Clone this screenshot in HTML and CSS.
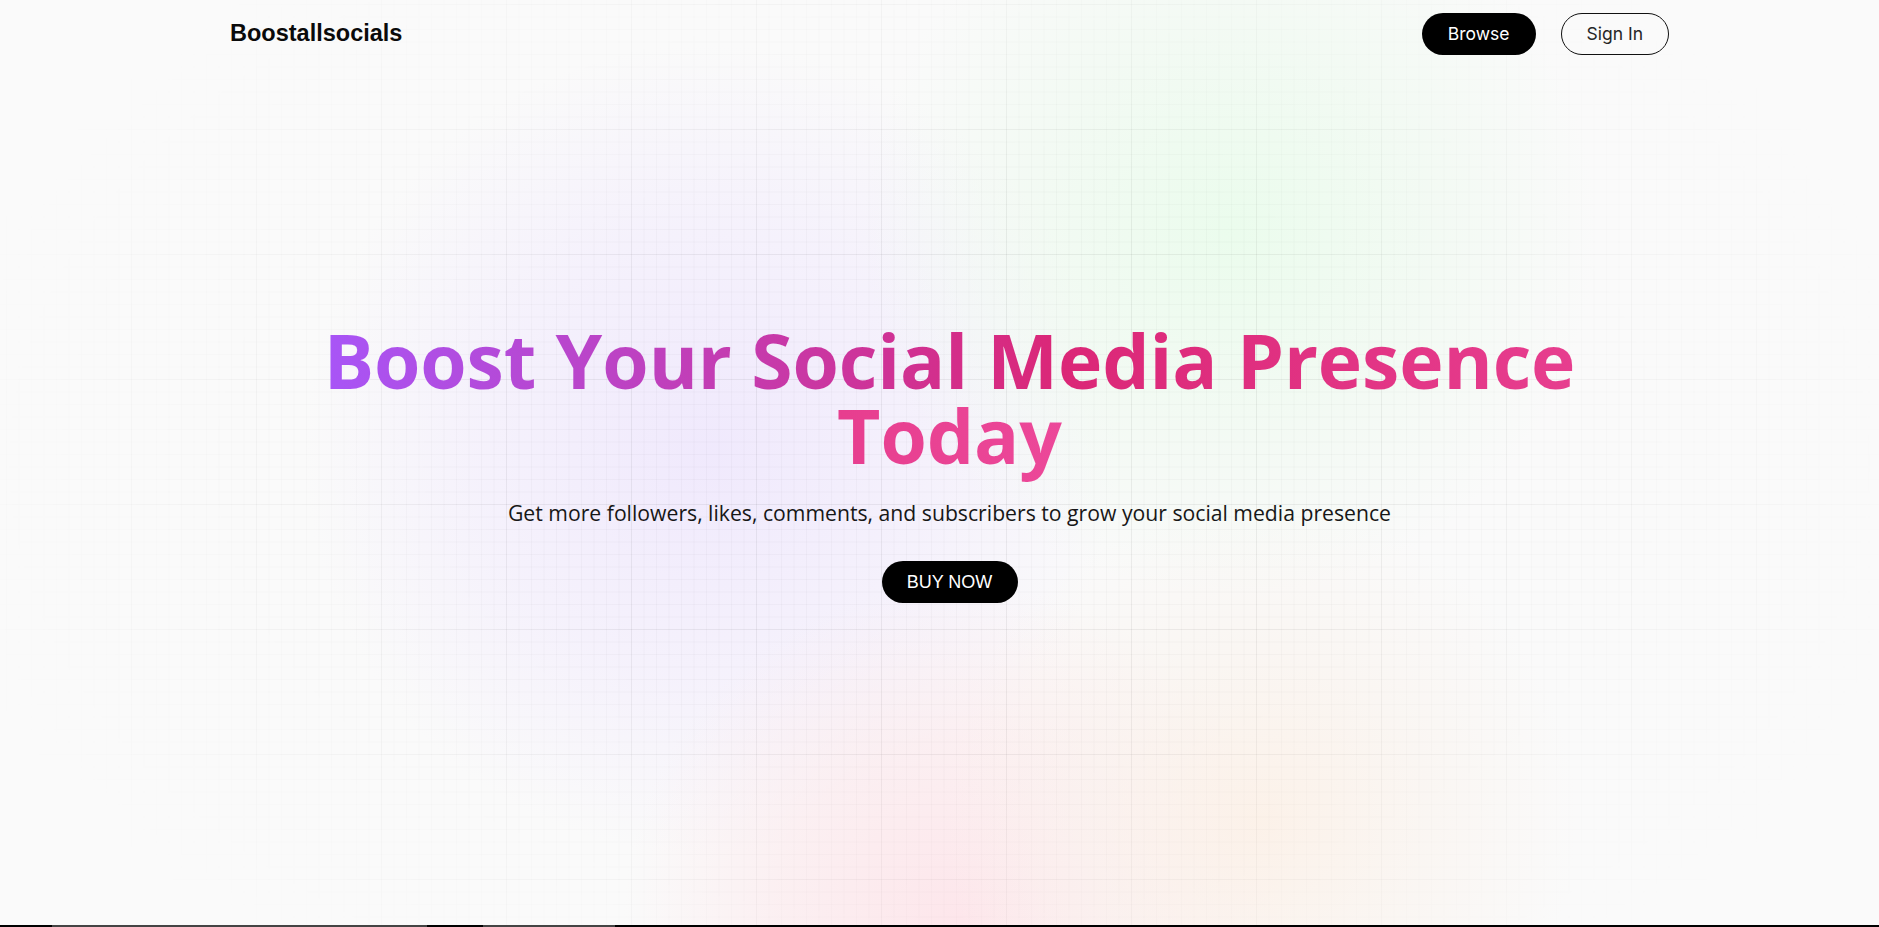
FILE: index.html
```html
<!DOCTYPE html>
<html lang="en">
<head>
<meta charset="utf-8">
<title>Boostallsocials</title>
<link rel="stylesheet" href="styles.css">
</head>
<body>
<div class="backdrop">
  <div class="blob blob-purple"></div>
  <div class="blob blob-green"></div>
  <div class="blob blob-pink"></div>
  <div class="blob blob-peach"></div>
  <div class="grid"></div>
</div>
<div class="page">
  <header class="nav">
    <a class="logo" href="#">Boostallsocials</a>
    <div class="nav-actions">
      <a class="btn btn-dark" href="#">Browse</a>
      <a class="btn btn-outline" href="#">Sign In</a>
    </div>
  </header>
  <main class="hero">
    <h1 class="hero-title"><span class="gradient-text">Boost Your Social Media Presence Today</span></h1>
    <p class="hero-sub">Get more followers, likes, comments, and subscribers to grow your social media presence</p>
    <a class="btn-buy" href="#">BUY NOW</a>
  </main>
</div>
<div class="scrollbar"></div>
</body>
</html>
```
FILE: styles.css
```css
* { box-sizing: border-box; }
html, body { margin: 0; padding: 0; }
body {
  background: #fafafa;
  font-family: "Open Sans", "Noto Sans", sans-serif;
  color: #111;
  min-height: 927px;
  overflow: hidden;
  position: relative;
}
a { text-decoration: none; }

.backdrop {
  position: absolute;
  inset: 0;
  overflow: hidden;
  z-index: 0;
}
.blob {
  position: absolute;
  border-radius: 50%;
}
.blob-purple {
  left: 300px; top: 40px; width: 820px; height: 820px;
  background: radial-gradient(circle, rgba(238,230,253,0.85) 0%, rgba(242,236,253,0.6) 40%, rgba(250,250,250,0) 70%);
}
.blob-green {
  left: 860px; top: -140px; width: 740px; height: 740px;
  background: radial-gradient(circle, rgba(234,252,236,0.95) 0%, rgba(238,250,239,0.6) 38%, rgba(250,250,250,0) 70%);
}
.blob-pink {
  left: 620px; top: 580px; width: 680px; height: 680px;
  background: radial-gradient(circle, rgba(253,230,235,1) 0%, rgba(252,235,238,0.7) 38%, rgba(250,250,250,0) 70%);
}
.blob-peach {
  left: 940px; top: 500px; width: 640px; height: 640px;
  background: radial-gradient(circle, rgba(252,240,230,0.85) 0%, rgba(250,243,237,0.55) 38%, rgba(250,250,250,0) 70%);
}
.grid {
  position: absolute;
  inset: 0;
  background-image:
    linear-gradient(to right, rgba(0,0,0,0.035) 1px, transparent 1px),
    linear-gradient(to bottom, rgba(0,0,0,0.035) 1px, transparent 1px),
    linear-gradient(to right, rgba(0,0,0,0.022) 1px, transparent 1px),
    linear-gradient(to bottom, rgba(0,0,0,0.022) 1px, transparent 1px);
  background-size: 125px 125px, 125px 125px, 12.5px 12.5px, 12.5px 12.5px;
  background-position: 6px 4px, 6px 4px, 6px 4px, 6px 4px;
  -webkit-mask-image: radial-gradient(ellipse 55% 70% at 50% 50%, #000 40%, transparent 100%);
  mask-image: radial-gradient(ellipse 55% 70% at 50% 50%, #000 40%, transparent 100%);
}

.page {
  position: relative;
  z-index: 1;
  padding-left: 20px;
}
.nav {
  width: 1439px;
  margin: 0 auto;
  height: 67px;
  display: flex;
  align-items: center;
  justify-content: space-between;
}
.logo {
  font-family: "Liberation Sans", Arial, sans-serif;
  font-weight: 700;
  font-size: 23.5px;
  color: #0a0a0a;
}
.nav-actions {
  display: flex;
  gap: 25px;
  align-items: center;
}
.btn {
  display: inline-flex;
  align-items: center;
  justify-content: center;
  height: 42px;
  border-radius: 21px;
  font-family: Inter, "Liberation Sans", sans-serif;
  font-size: 17.5px;
  white-space: nowrap;
}
.btn-dark {
  background: #000;
  color: #fff;
  padding: 0 26px;
}
.btn-outline {
  border: 1px solid #111;
  color: #262626;
  padding: 0 25px;
}

.hero {
  width: 1439px;
  margin: 0 auto;
  display: flex;
  flex-direction: column;
  align-items: center;
  text-align: center;
  padding-top: 256px;
}
.hero-title {
  margin: 0;
  font-family: "Open Sans", "Noto Sans", sans-serif;
  font-weight: 700;
  font-size: 75px;
  line-height: 75px;
  letter-spacing: -0.1px;
  width: 1320px;
}
.gradient-text {
  background: linear-gradient(to right, #a855f7, #db2777, #ec4899);
  -webkit-background-clip: text;
  background-clip: text;
  color: transparent;
}
.hero-sub {
  margin: 26px 0 0;
  font-family: "Open Sans", "Noto Sans", sans-serif;
  font-size: 21.2px;
  line-height: 28px;
  color: #171717;
}
.btn-buy {
  margin-top: 34px;
  display: inline-flex;
  align-items: center;
  justify-content: center;
  width: 136px;
  height: 42px;
  border-radius: 21px;
  background: #000;
  color: #fff;
  font-family: "Liberation Sans", Arial, sans-serif;
  font-size: 18px;
}

.scrollbar {
  position: fixed;
  left: 0; right: 0; bottom: 0;
  height: 2px;
  z-index: 5;
  background: linear-gradient(to right, #000 0 52px, #444 52px 427px, #000 427px 483px, #444 483px 615px, #000 615px);
}
```
